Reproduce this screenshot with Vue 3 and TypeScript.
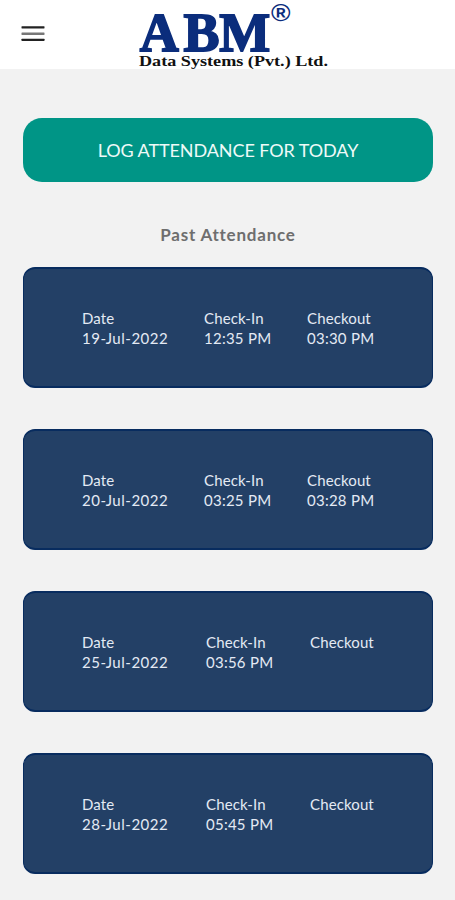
<script setup lang="ts">
interface AttendanceRecord {
  date: string
  checkIn: string
  checkout: string
}

const records: AttendanceRecord[] = [
  { date: '19-Jul-2022', checkIn: '12:35 PM', checkout: '03:30 PM' },
  { date: '20-Jul-2022', checkIn: '03:25 PM', checkout: '03:28 PM' },
  { date: '25-Jul-2022', checkIn: '03:56 PM', checkout: '' },
  { date: '28-Jul-2022', checkIn: '05:45 PM', checkout: '' },
]
</script>

<template>
  <div class="screen">
    <header class="topbar">
      <button class="menu" aria-label="Menu">
        <svg width="24" height="16" viewBox="0 0 24 16">
          <rect x="0.5" y="0.3" width="23" height="2.1" rx="0.4" fill="#222" />
          <rect x="0.5" y="6.5" width="23" height="2.4" rx="0.4" fill="#777" />
          <rect x="0.5" y="12.8" width="23" height="2.1" rx="0.4" fill="#222" />
        </svg>
      </button>
      <svg class="logo" width="200" height="69" viewBox="0 0 200 69">
        <text class="brand" x="4.8 48.5 84.3" y="50.8">ABM</text>
        <text class="mark" x="136" y="20.5" textLength="19.5" lengthAdjust="spacingAndGlyphs">®</text>
        <text class="company" x="4" y="65.5" textLength="189" lengthAdjust="spacingAndGlyphs">Data Systems (Pvt.) Ltd.</text>
      </svg>
    </header>
    <main class="content">
      <button class="log">LOG ATTENDANCE FOR TODAY</button>
      <h2 class="heading">Past Attendance</h2>
      <div class="list">
        <section v-for="r in records" :key="r.date" class="card" :class="{ open: !r.checkout }">
          <div class="col">
            <span class="label">Date</span>
            <span class="date">{{ r.date }}</span>
          </div>
          <div class="col">
            <span class="label">Check-In</span>
            <span class="time">{{ r.checkIn }}</span>
          </div>
          <div class="col">
            <span class="label">Checkout</span>
            <span class="time">{{ r.checkout }}</span>
          </div>
        </section>
      </div>
    </main>
  </div>
</template>

<style>
body {
  background: #f2f2f2;
}
</style>

<style scoped>
.screen {
  box-sizing: border-box;
  width: 455px;
  height: 900px;
  overflow: hidden;
  background: #f2f2f2;
  font-family: Lato, 'Noto Sans', sans-serif;
}
.topbar {
  display: flex;
  height: 69px;
  background: #fff;
}
.menu {
  display: flex;
  align-items: center;
  width: 135px;
  height: 67px;
  padding: 0 0 0 21px;
  border: 0;
  background: none;
}
.logo {
  display: block;
}
.brand {
  font: 700 54px 'Liberation Serif', serif;
  fill: #0b2d7c;
  stroke: #0b2d7c;
  stroke-width: 1.8px;
}
.mark {
  font: 700 24px 'Liberation Sans', sans-serif;
  fill: #0b2d7c;
}
.company {
  font: 700 14px 'Liberation Serif', serif;
  fill: #111;
}
.content {
  padding: 49px 22px 0 23px;
}
.log {
  display: block;
  width: 100%;
  height: 64px;
  padding: 0 0 1px;
  border: 0;
  border-radius: 19px;
  background: #009586;
  color: #eefaf8;
  font: 400 18px Lato, sans-serif;
  letter-spacing: -0.08px;
}
.heading {
  margin: 40px 0 0;
  height: 26px;
  line-height: 26px;
  text-align: center;
  color: #6e6e6e;
  font-size: 17px;
  font-weight: 700;
  letter-spacing: 0.78px;
}
.list {
  display: grid;
  gap: 41px;
  margin-top: 19px;
}
.card {
  box-sizing: border-box;
  display: grid;
  grid-template-columns: 122px 103px 1fr;
  height: 121px;
  padding: 39px 0 0 58px;
  border: solid #082c5f;
  border-width: 2px 1px;
  border-radius: 12px;
  background: #234066;
  color: #e4eaf4;
  font-size: 15px;
  line-height: 20px;
}
.card.open {
  grid-template-columns: 124px 104px 1fr;
}
.col {
  display: flex;
  flex-direction: column;
}
.label {
  letter-spacing: 0.12px;
}
.date {
  letter-spacing: 0.52px;
}
.time {
  letter-spacing: 0.25px;
}
</style>
